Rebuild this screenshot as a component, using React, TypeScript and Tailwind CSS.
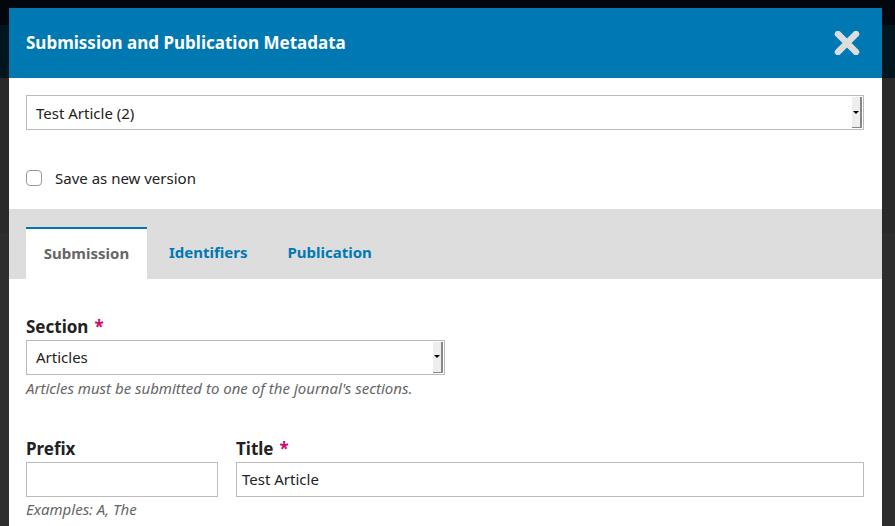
import React from 'react';

const font = "font-['Noto_Sans','Open_Sans',sans-serif]";

function SelectBox({ value, className = '' }: { value: string; className?: string }) {
  return (
    <div className={`flex h-[35px] items-stretch border border-[#bbb] bg-white ${className}`}>
      <div className="flex flex-1 items-center pl-[9px] pt-px text-[15px] text-[#222]">{value}</div>
      <div className="my-px mr-px flex w-[10px] items-center justify-center border-r-2 border-b border-[#888] bg-[#eee]">
        <div className="h-0 w-0 border-x-[3px] border-t-[3px] border-x-transparent border-t-black" />
      </div>
    </div>
  );
}

function Label({ text, required }: { text: string; required?: boolean }) {
  return (
    <div className="text-[17px] font-bold leading-[20px] text-[#222]">
      {text}
      {required && <span className="ml-[6px] text-[#d00a6c]">*</span>}
    </div>
  );
}

export default function App() {
  return (
    <div
      className={`${font} h-[526px] w-[895px] overflow-hidden bg-[linear-gradient(to_bottom,#02070d_0,#02070d_25px,#00161f_25px,#00161f_78px,#2a2a2a_78px,#2a2a2a_233px,#2e2e2e_233px)] pl-[9px] pt-[8px]`}
    >
      <div className="flex h-[600px] w-[873px] flex-col bg-white">
        {/* header */}
        <div className="flex h-[70px] items-center justify-between bg-[#0079b3] pl-[17px] pr-[22px]">
          <h1 className="text-[17px] font-bold text-white">Submission and Publication Metadata</h1>
          <svg width="26" height="24" viewBox="0 0 26 24">
            <path d="M4 3 L22 21 M22 3 L4 21" stroke="#dddddd" strokeWidth="6.5" strokeLinecap="round" />
          </svg>
        </div>

        <div className="px-[17px] pt-[17px]">
          <SelectBox value="Test Article (2)" className="w-[838px]" />
          <label className="mt-[37px] flex items-center">
            <span className="h-[16px] w-[16px] rounded-[4px] border border-[#999] bg-white" />
            <span className="ml-[13px] text-[15px] text-[#222]">Save as new version</span>
          </label>
        </div>

        <div className="mt-[19px] flex h-[70px] items-end bg-[#ddd] pl-[17px]">
          <div className="flex h-[52px] w-[121px] items-center justify-center border-t-2 border-[#0079b3] bg-white pb-[1px] text-[15px] font-bold text-[#666]">
            Submission
          </div>
          <div className="flex h-[52px] items-center pb-[1px] pl-[22px] text-[15px] font-bold text-[#0079b3]">Identifiers</div>
          <div className="flex h-[52px] items-center pb-[1px] pl-[40px] text-[15px] font-bold text-[#0079b3]">Publication</div>
        </div>

        <div className="px-[17px] pt-[38px]">
          <Label text="Section" required />
          <SelectBox value="Articles" className="mt-[3px] w-[419px]" />
          <p className="mt-[3px] text-[15px] italic leading-[20px] text-[#666]">
            Articles must be submitted to one of the journal's sections.
          </p>

          <div className="mt-[41px] flex gap-[18px]">
            <div className="w-[192px]">
              <Label text="Prefix" />
              <div className="mt-[3px] h-[35px] border border-[#bbb] bg-white" />
              <p className="mt-[2px] text-[15px] italic leading-[20px] text-[#666]">Examples: A, The</p>
            </div>
            <div className="w-[628px]">
              <Label text="Title" required />
              <div className="mt-[3px] flex h-[35px] items-center border border-[#bbb] bg-white pl-[5px] pt-px text-[15px] text-[#222]">
                Test Article
              </div>
            </div>
          </div>
        </div>
      </div>
    </div>
  );
}
